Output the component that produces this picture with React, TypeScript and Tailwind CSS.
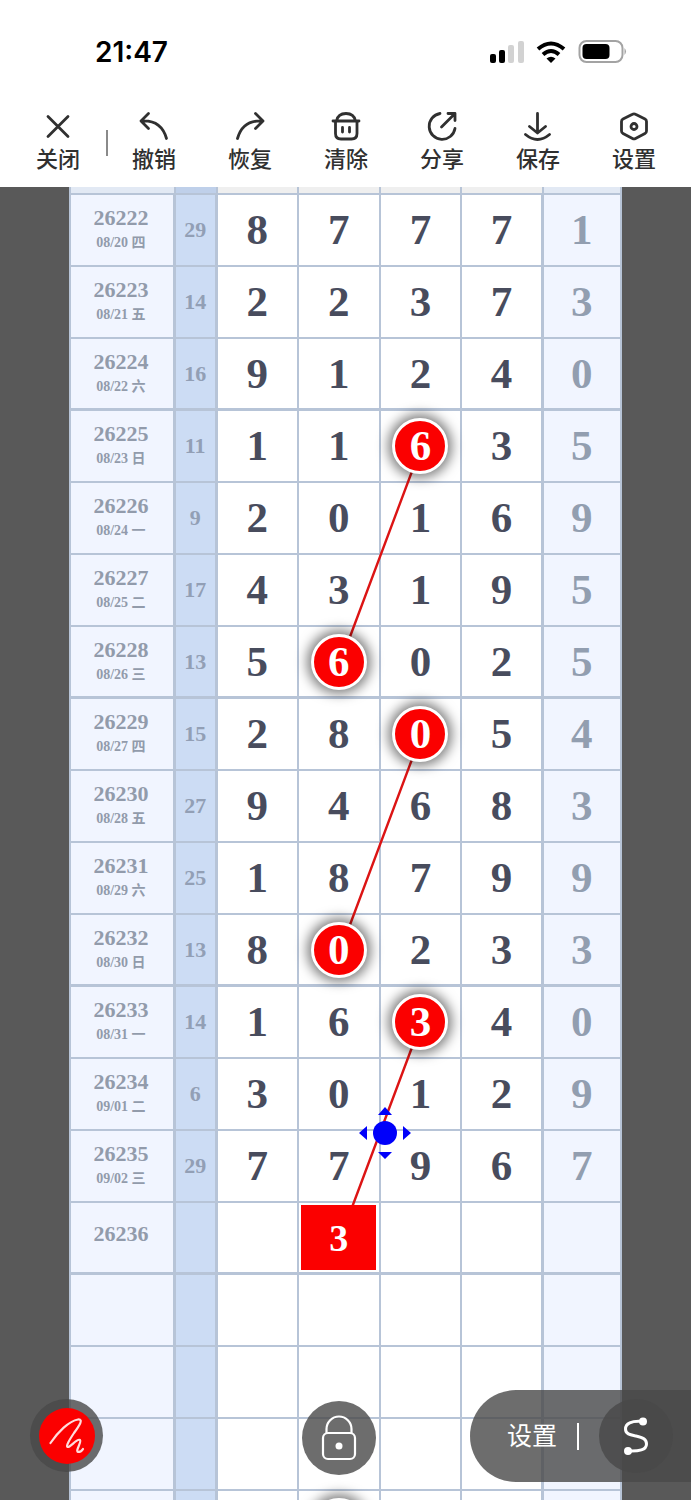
import type { ReactNode } from "react";

type Row = {
  issue: string;
  date: string;
  sum: string;
  digits: string[];
  marked?: number;
  guess?: boolean;
};

const rows: Row[] = [
  { issue: "26222", date: "08/20 四", sum: "29", digits: ["8", "7", "7", "7", "1"] },
  { issue: "26223", date: "08/21 五", sum: "14", digits: ["2", "2", "3", "7", "3"] },
  { issue: "26224", date: "08/22 六", sum: "16", digits: ["9", "1", "2", "4", "0"] },
  { issue: "26225", date: "08/23 日", sum: "11", digits: ["1", "1", "6", "3", "5"], marked: 2 },
  { issue: "26226", date: "08/24 一", sum: "9", digits: ["2", "0", "1", "6", "9"] },
  { issue: "26227", date: "08/25 二", sum: "17", digits: ["4", "3", "1", "9", "5"] },
  { issue: "26228", date: "08/26 三", sum: "13", digits: ["5", "6", "0", "2", "5"], marked: 1 },
  { issue: "26229", date: "08/27 四", sum: "15", digits: ["2", "8", "0", "5", "4"], marked: 2 },
  { issue: "26230", date: "08/28 五", sum: "27", digits: ["9", "4", "6", "8", "3"] },
  { issue: "26231", date: "08/29 六", sum: "25", digits: ["1", "8", "7", "9", "9"] },
  { issue: "26232", date: "08/30 日", sum: "13", digits: ["8", "0", "2", "3", "3"], marked: 1 },
  { issue: "26233", date: "08/31 一", sum: "14", digits: ["1", "6", "3", "4", "0"], marked: 2 },
  { issue: "26234", date: "09/01 二", sum: "6", digits: ["3", "0", "1", "2", "9"] },
  { issue: "26235", date: "09/02 三", sum: "29", digits: ["7", "7", "9", "6", "7"] },
  { issue: "26236", date: "", sum: "", digits: ["", "3", "", "", ""], guess: true },
  { issue: "", date: "", sum: "", digits: ["", "", "", "", ""] },
  { issue: "", date: "", sum: "", digits: ["", "", "", "", ""] },
  { issue: "", date: "", sum: "", digits: ["", "", "", "", ""] },
  { issue: "", date: "", sum: "", digits: ["", "", "", "", ""], marked: 1 },
];

const Icon = ({ children }: { children: ReactNode }) => (
  <svg viewBox="0 0 32 32" className="size-8" fill="none" stroke="currentColor" strokeWidth="2.8" strokeLinecap="round" strokeLinejoin="round" aria-hidden="true">
    {children}
  </svg>
);

const tools = [
  { label: "关闭", icon: <path d="M6 6.500 26 26.500M26 6.500 6 26.500" /> },
  { label: "撤销", icon: <path d="M10.500 3.500 3 11l7.500 7.500M3 11C16 10 25 16 28.500 28.500" /> },
  { label: "恢复", icon: <path d="M21.500 3.500 29 11l-7.500 7.500M29 11C16 10 7 16 3.500 28.500" /> },
  { label: "清除", icon: <path d="M3 11h26M6.500 11C7.500 6 11 3.500 16 3.500s8.500 2.500 9.500 7.500M5.500 11v12.500q0 5.500 5.500 5.500h10.500q5.500 0 5.500-5.500V11M12.500 17.500v4.500M19.500 17.500v4.500" /> },
  { label: "分享", icon: <path d="M14 3.500A13 13 0 1 0 29 18.500M15.500 17 29 3.500M22 3.500h7v7" /> },
  { label: "保存", icon: <path d="M15.500 3.500V23M7.500 16.500l8 6.500 8-6.500M3.500 24.500q12 10 24 0" /> },
  {
    label: "设置",
    icon: (
      <>
        <path d="M14.500 4.200q1.500-.8 3 0L27 9q1.500.8 1.500 2.500v9.500q0 1.700-1.500 2.500l-9.500 5q-1.500.8-3 0L5 23.500q-1.500-.8-1.500-2.500v-9.500Q3.500 9.800 5 9Z" />
        <circle cx="16" cy="16.500" r="3" />
      </>
    ),
  },
];

function StatusBar() {
  return (
    <div className="flex h-[103px] items-center justify-between pr-16 pl-[95px] text-black">
      <span className="font-['Inter'] text-[28px] leading-8 font-semibold">21:47</span>
      <div className="flex items-center gap-3">
        <svg viewBox="0 0 35 22" className="h-[22px] w-[35px]" aria-hidden="true">
          <rect x="1" y="13" width="6" height="9" rx="2" />
          <rect x="10" y="9" width="6" height="13" rx="2" />
          <rect x="19" y="4" width="6" height="18" rx="2" fill="#d2d2d2" />
          <rect x="29" y="0" width="6" height="22" rx="2" fill="#d2d2d2" />
        </svg>
        <svg viewBox="0 0 30 22" className="h-[22px] w-[30px]" fill="none" stroke="#000" strokeWidth="4" aria-hidden="true">
          <path d="M2 8Q15-3 28 8" />
          <path d="M7 13.500Q15 6.500 23 13.500" />
          <path d="M10.500 17.500Q15 14 19.500 17.500L15 22Z" fill="#000" stroke="none" />
        </svg>
        <svg viewBox="0 0 49 23" className="h-[23px] w-[49px]" aria-hidden="true">
          <rect x="1.500" y="1" width="43" height="21" rx="7" fill="none" stroke="#a3a3a3" strokeWidth="2" />
          <rect x="4.500" y="4" width="27" height="15" rx="4" />
          <path d="M46.500 8q3 3.500 0 7Z" fill="#a3a3a3" />
        </svg>
      </div>
    </div>
  );
}

function Toolbar() {
  return (
    <div className="flex pt-[7px] pr-[9px] pb-[11px] pl-[10px] text-[#303030]">
      {tools.map((tool, i) => (
        <div key={tool.label} className="flex flex-1 items-center">
          <button className="flex flex-1 flex-col items-center">
            <Icon>{tool.icon}</Icon>
            <span className="text-[22px] leading-[34px] font-medium">{tool.label}</span>
          </button>
          {i === 0 && <span className="-mr-0.5 h-[26px] w-0.5 bg-[#8a8a8a]" />}
        </div>
      ))}
    </div>
  );
}

const Marker = ({ children }: { children: ReactNode }) => (
  <span className="relative z-10 mx-auto flex size-14 items-center justify-center rounded-full border-3 border-white bg-[#fb0000] text-white shadow-[0_0_12px_4px_rgba(0,0,0,0.5)]">
    {children}
  </span>
);

function TrendTable() {
  return (
    <table className="w-full table-fixed border-separate border-spacing-0 border-l-2 border-[#b7c4d7] font-['Liberation_Serif','Noto_Sans_CJK_SC',serif] font-bold">
      <colgroup>
        <col className="w-[19%]" />
        <col className="w-[7.6%]" />
        <col className="w-[14.8%]" />
        <col className="w-[14.8%]" />
        <col className="w-[14.8%]" />
        <col className="w-[14.8%]" />
        <col />
      </colgroup>
      <tbody className="text-center [&_td]:border-[#b7c4d7] [&_td]:p-0">
        {/* bottom edge of the row that is scrolled under the toolbar */}
        <tr className="h-2 [&>td]:border-r-2 [&>td]:border-b-2">
          <td className="bg-[#e2e9f4]" />
          <td className="bg-[#bfd0ea]" />
          <td className="bg-[#efefef]" />
          <td className="bg-[#efefef]" />
          <td className="bg-[#efefef]" />
          <td className="bg-[#efefef]" />
          <td className="bg-[#e2e9f4]" />
        </tr>
        {rows.map((row, i) => {
          const line = i % 4 === 2 ? "border-b-3" : "border-b-2";
          return (
            <tr key={i} className="h-[72px]">
              <td className={`${line} border-r-3 bg-[#f1f5ff] text-[#929bab]`}>
                <div className={row.guess ? "pr-0.5 pb-2" : "pr-0.5"}>
                  <div className="text-[22px] leading-[26px]">{row.issue}</div>
                  {row.date && <div className="text-sm leading-6">{row.date}</div>}
                </div>
              </td>
              <td className={`${line} border-r-3 bg-[#ccdcf4] text-[22px] leading-8 text-[#929fb5]`}>{row.sum}</td>
              {row.digits.map((digit, col) => (
                <td
                  key={col}
                  className={`${line} ${col === 3 ? "border-r-3" : "border-r-2"} ${col === 4 ? "bg-[#f1f5ff] text-[#929eb0]" : "bg-white text-[#484c5d]"} text-[43px] leading-[48px]`}
                >
                  {row.marked === col ? (
                    <Marker>{digit}</Marker>
                  ) : row.guess && digit ? (
                    <span className="relative z-10 mx-auto flex h-[65px] w-[75px] items-center justify-center bg-[#fb0000] text-[38px] text-white">
                      {digit}
                    </span>
                  ) : (
                    digit
                  )}
                </td>
              ))}
            </tr>
          );
        })}
      </tbody>
    </table>
  );
}

function DrawnLines() {
  return (
    <svg viewBox="0 0 553 1376" preserveAspectRatio="none" className="pointer-events-none absolute inset-0 h-full w-full" stroke="#dc1414" strokeWidth="2.4" aria-hidden="true">
      <path d="M353 258 272 474M353 546 272 762M353 834 272 1050" />
    </svg>
  );
}

const MoveHandle = () => (
  <svg viewBox="0 0 52 52" className="absolute top-[920px] left-[290px] z-20 size-[52px]" fill="#0000fa" aria-hidden="true">
    <circle cx="26" cy="26" r="12" />
    <path d="M26 0 33 8H19ZM26 52 33 45H19ZM0 26 8 19V33ZM52 26 44 19V33Z" />
  </svg>
);

export default function App() {
  return (
    <div className="flex h-screen flex-col overflow-hidden bg-white font-['Inter','Noto_Sans_CJK_SC',sans-serif]">
      <header className="shrink-0">
        <StatusBar />
        <Toolbar />
      </header>

      <main className="relative flex-1 overflow-hidden bg-[#595959]">
        <div className="relative mx-auto w-4/5">
          <TrendTable />
          <DrawnLines />
          <MoveHandle />
        </div>

        {/* --- FLOATING CONTROLS --- */}
        <button aria-label="画笔" className="absolute bottom-7 left-[30px] z-30 flex size-[73px] items-center justify-center rounded-full bg-[#484848]/80">
          <span className="flex size-14 items-center justify-center rounded-full bg-[#fb0000]">
            <svg viewBox="0 0 36 36" className="size-9" fill="none" stroke="#ffdcdc" strokeWidth="2.200" strokeLinecap="round" strokeLinejoin="round" aria-hidden="true">
              <path d="M1.500 25C9 14 20 3 29 1.500C35 1 30 8 25 15C21 21 16 29 19 29C22 29 28 20 31 22C33 24 26 33 29 34C31 34 33 33 34 31" />
            </svg>
          </span>
        </button>

        <button aria-label="锁定" className="absolute bottom-[25px] left-[49%] z-30 flex size-[74px] -translate-x-1/2 items-center justify-center rounded-full bg-[#484848]/80">
          <svg viewBox="0 0 36 46" className="h-[46px] w-9" fill="none" stroke="#fff" strokeWidth="2.200" aria-hidden="true">
            <path d="M5.500 18v-4a12.500 12.500 0 0 1 25 0v4" />
            <rect x="2" y="18" width="32" height="26" rx="5" />
            <circle cx="18" cy="31" r="3.500" fill="#fff" stroke="none" />
          </svg>
        </button>

        <div className="absolute right-0 bottom-[18px] z-30 flex h-[92px] items-center rounded-l-full bg-[#484848]/80 pr-[18px] pl-[37px] text-white">
          <button className="text-[25px] leading-8">设置</button>
          <span className="ml-5 h-[27px] w-0.5 bg-white" />
          <button aria-label="曲线" className="ml-5 flex size-[74px] items-center justify-center rounded-full bg-[#484848]/80">
            <svg viewBox="0 0 26 38" className="h-[38px] w-[26px]" fill="none" stroke="#fff" strokeWidth="3" strokeLinecap="round" aria-hidden="true">
              <path d="M20 4.500C8 3.500 2.500 6.500 2.500 12C2.500 17.500 8 18 13 19C20 20.500 23.500 22 23.500 27C23.500 33 16 34.500 5 34" />
              <circle cx="20" cy="4.500" r="2.500" fill="#fff" />
              <circle cx="5" cy="34" r="2.500" fill="#fff" />
            </svg>
          </button>
        </div>
      </main>
    </div>
  );
}
